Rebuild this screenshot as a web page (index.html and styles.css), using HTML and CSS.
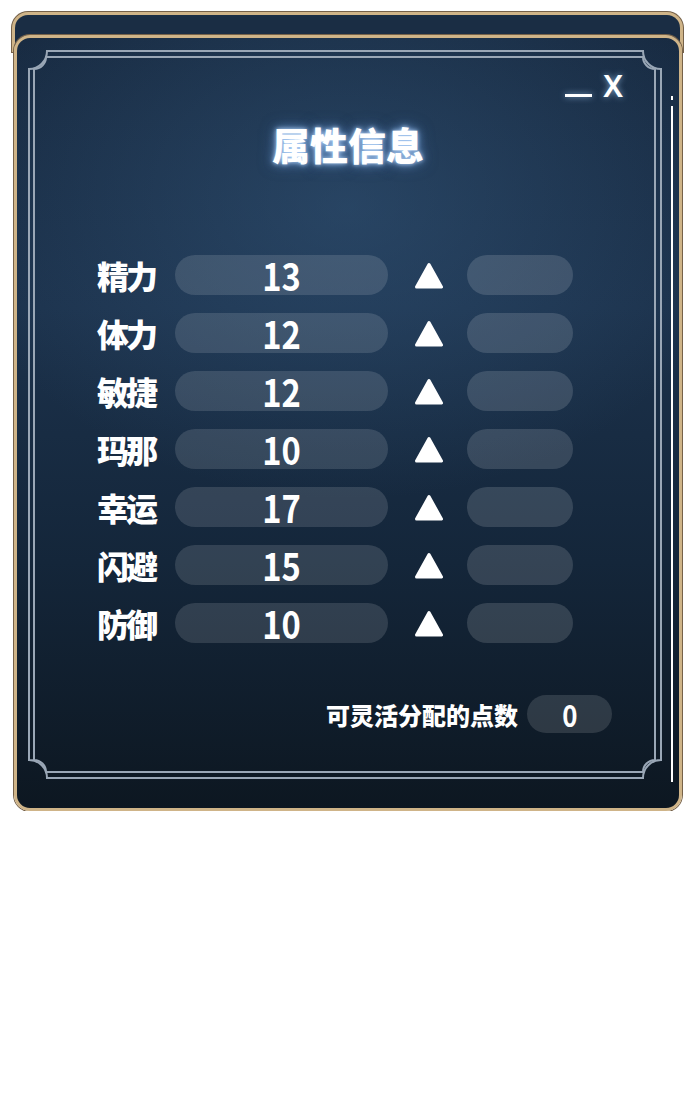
FILE: index.html
```html
<!DOCTYPE html>
<html lang="zh-CN">
<head>
  <meta charset="UTF-8">
  <title>属性信息</title>
  <link rel="stylesheet" href="styles.css">
</head>
<body>

  <div class="card-back"></div>
  <div class="card">
    <svg class="frame" width="662" height="770" viewBox="0 0 662 770">
      <path d="M30 13 H626 A18 18 0 0 0 644 31 V722 A18 18 0 0 0 626 740 H30 A18 18 0 0 0 12 722 V31 A18 18 0 0 0 30 13 Z" />
      <path d="M29 19 H626 A12 12 0 0 0 638 31 V722 A12 12 0 0 0 626 734 H29 A12 12 0 0 0 17 722 V31 A12 12 0 0 0 29 19 Z" />
      <rect class="scroll" x="654" y="58" width="2" height="4" />
      <rect class="scroll" x="654" y="68" width="2" height="676" />
    </svg>

    <div class="window-controls">
      <span class="minimize"></span>
      <span class="close">X</span>
    </div>

    <h1 class="title">属性信息</h1>

    <div class="stats">
      <div class="stat-row">
        <span class="stat-name">精力</span>
        <span class="stat-value"><span class="num">13</span></span>
        <svg class="up" width="28" height="28" viewBox="0 0 28 28"><path d="M14 3.5 L26.5 26 L1.5 26 Z" /></svg>
        <span class="stat-add"></span>
      </div>
      <div class="stat-row">
        <span class="stat-name">体力</span>
        <span class="stat-value"><span class="num">12</span></span>
        <svg class="up" width="28" height="28" viewBox="0 0 28 28"><path d="M14 3.5 L26.5 26 L1.5 26 Z" /></svg>
        <span class="stat-add"></span>
      </div>
      <div class="stat-row">
        <span class="stat-name">敏捷</span>
        <span class="stat-value"><span class="num">12</span></span>
        <svg class="up" width="28" height="28" viewBox="0 0 28 28"><path d="M14 3.5 L26.5 26 L1.5 26 Z" /></svg>
        <span class="stat-add"></span>
      </div>
      <div class="stat-row">
        <span class="stat-name">玛那</span>
        <span class="stat-value"><span class="num">10</span></span>
        <svg class="up" width="28" height="28" viewBox="0 0 28 28"><path d="M14 3.5 L26.5 26 L1.5 26 Z" /></svg>
        <span class="stat-add"></span>
      </div>
      <div class="stat-row">
        <span class="stat-name">幸运</span>
        <span class="stat-value"><span class="num">17</span></span>
        <svg class="up" width="28" height="28" viewBox="0 0 28 28"><path d="M14 3.5 L26.5 26 L1.5 26 Z" /></svg>
        <span class="stat-add"></span>
      </div>
      <div class="stat-row">
        <span class="stat-name">闪避</span>
        <span class="stat-value"><span class="num">15</span></span>
        <svg class="up" width="28" height="28" viewBox="0 0 28 28"><path d="M14 3.5 L26.5 26 L1.5 26 Z" /></svg>
        <span class="stat-add"></span>
      </div>
      <div class="stat-row">
        <span class="stat-name">防御</span>
        <span class="stat-value"><span class="num">10</span></span>
        <svg class="up" width="28" height="28" viewBox="0 0 28 28"><path d="M14 3.5 L26.5 26 L1.5 26 Z" /></svg>
        <span class="stat-add"></span>
      </div>
    </div>

    <div class="points">
      <span class="points-label">可灵活分配的点数</span>
      <span class="points-value"><span class="num">0</span></span>
    </div>
  </div>

</body>
</html>
```

FILE: styles.css
```css
body {
  margin: 0;
  background: #fff;
  font-family: "Noto Sans CJK SC", "Noto Sans", sans-serif;
  color: #fff;
}
.card-back {
  box-sizing: border-box;
  width: 671px;
  height: 40px;
  margin: 12px 0 0 12px;
  border: 3px solid #cfb488;
  border-bottom: none;
  border-radius: 16px 16px 0 0;
  background: #1a2d44;
  box-shadow: 0 0 0 1px #76624a;
}
.card {
  position: relative;
  box-sizing: border-box;
  width: 668px;
  height: 776px;
  margin: -17px 0 0 14px;
  border: 3px solid #cfb488;
  border-radius: 16px;
  box-shadow: 0 0 0 1px #76624a;
  background:
    radial-gradient(ellipse 60% 38% at 50% 22%, rgba(60, 100, 140, 0.4), rgba(60, 100, 140, 0)),
    linear-gradient(180deg, #182b42 0%, #1c324c 35%, #14263a 68%, #0d1721 100%);
}
.frame {
  position: absolute;
  left: 0;
  top: 0;
}
.frame path {
  fill: none;
  stroke: #9aa7b6;
  stroke-width: 2;
}
.frame .scroll {
  fill: #fff;
}
.window-controls {
  display: flex;
  justify-content: flex-end;
  align-items: flex-end;
  gap: 11px;
  height: 30px;
  margin-top: 32px;
  padding-right: 56px;
}
.minimize {
  width: 27px;
  height: 3px;
  margin-bottom: 3px;
  background: #fff;
  box-shadow: 0 0 6px rgba(150, 190, 230, 0.8);
}
.close {
  font-family: "Noto Sans", sans-serif;
  font-size: 31px;
  font-weight: 600;
  line-height: 30px;
  text-shadow: 0 0 6px rgba(150, 190, 230, 0.8);
}
.title {
  margin: 21px 0 0;
  font-size: 38px;
  line-height: 46px;
  font-weight: 900;
  text-align: center;
  text-shadow: 0 0 4px rgba(190, 220, 255, 0.9), 0 0 10px rgba(130, 180, 240, 0.7), 0 0 16px rgba(100, 150, 220, 0.5);
}
.stats {
  display: flex;
  flex-direction: column;
  gap: 18px;
  margin-top: 88px;
  padding-left: 80px;
}
.stat-row {
  display: flex;
  align-items: center;
  height: 40px;
}
.stat-name {
  width: 58px;
  font-size: 32px;
  font-weight: 900;
  letter-spacing: -3px;
  line-height: 40px;
  white-space: nowrap;
}
.stat-value {
  width: 213px;
  height: 40px;
  margin-left: 20px;
  border-radius: 20px;
  background: rgba(255, 255, 255, 0.13);
  font-size: 38px;
  font-weight: 700;
  line-height: 40px;
  text-align: center;
}
.num {
  display: inline-block;
  transform: scaleX(0.86);
}
.up {
  margin-left: 27px;
}
.up path {
  fill: #fff;
  stroke: #fff;
  stroke-width: 3;
  stroke-linejoin: round;
}
.stat-add {
  width: 106px;
  height: 40px;
  margin-left: 24px;
  border-radius: 20px;
  background: rgba(255, 255, 255, 0.14);
}
.points {
  display: flex;
  justify-content: flex-end;
  align-items: center;
  gap: 9px;
  margin-top: 52px;
  padding-right: 67px;
}
.points-label {
  font-size: 24px;
  font-weight: 900;
}
.points-value {
  width: 85px;
  height: 38px;
  border-radius: 19px;
  background: rgba(255, 255, 255, 0.13);
  font-size: 30px;
  font-weight: 700;
  line-height: 38px;
  text-align: center;
}
```
